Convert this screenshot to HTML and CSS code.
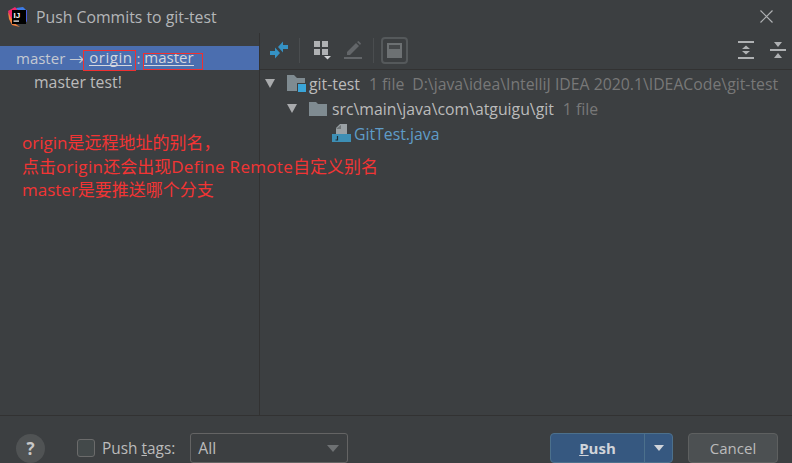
FILE: index.html
```html
<!DOCTYPE html>
<html>
<head lang="en">
    <meta charset="UTF-8">
    <title>Push Commits to git-test</title>
    <link rel="stylesheet" href="styles.css">
</head>
<body>
<div class="dialog">
    <div class="titlebar">
        <svg class="logo" width="20" height="20" viewBox="0 0 20 20">
            <path d="M0 4 L7 0 L11 4 L4 13 L2 12Z" fill="#f0286c"/>
            <path d="M8 1 L15 0 L19 4 L19 9 L12 6Z" fill="#3c7be8"/>
            <path d="M15 3 L19 3 L19 15 L14 12Z" fill="#4a5ee0"/>
            <path d="M0 5 L6 16 L12 20 L4 18 L1 12Z" fill="#f5823c"/>
            <rect x="4" y="3" width="14" height="14" fill="#000"/>
            <text class="logo-text" x="5.5" y="11">IJ</text>
            <rect x="5.5" y="13.5" width="5.5" height="1.2" fill="#fff"/>
        </svg>
        <span class="title">Push Commits to git-test</span>
        <svg class="close" width="13" height="13" viewBox="0 0 13 13">
            <path d="M0.5 0.5 L12.5 12.5 M12.5 0.5 L0.5 12.5" stroke="#afb1b3" stroke-width="1.2" fill="none"/>
        </svg>
    </div>

    <div class="main">
        <div class="left">
            <div class="row-selected">
                <span>master</span>
                <span class="arrow">→</span>
                <a class="link link-origin">origin</a>
                <span class="colon">:</span>
                <a class="link">master</a>
            </div>
            <div class="row-commit">master test!</div>
        </div>

        <div class="right">
            <div class="toolbar">
                <svg class="tool" width="18" height="18" viewBox="0 0 18 18">
                    <path d="M8 6 L13 0.5 V4 H18 V8 H13 V11.5Z" fill="#3592c4"/>
                    <path d="M10 12 L5 6.5 V10 H0 V14 H5 V17.5Z" fill="#3592c4"/>
                </svg>
                <span class="sep sep-a"></span>
                <svg class="tool tool-group" width="17" height="19" viewBox="0 0 17 19">
                    <rect x="0" y="0" width="6" height="6" fill="#afb1b3"/>
                    <rect x="8" y="0" width="6" height="6" fill="#afb1b3"/>
                    <rect x="0" y="8" width="6" height="6" fill="#afb1b3"/>
                    <rect x="8" y="8" width="6" height="6" fill="#afb1b3"/>
                    <path d="M10 15 H17 L13.5 18.5Z" fill="#d0d2d4"/>
                </svg>
                <svg class="tool tool-edit" width="18" height="18" viewBox="0 0 18 18">
                    <path d="M3 11 L12 2 L15 5 L6 14 L3 14Z" fill="#636669"/>
                    <path d="M13 1 L14.5 0 L17 2.5 L16 4Z" fill="#636669"/>
                    <rect x="0" y="16" width="18" height="2" fill="#636669"/>
                </svg>
                <span class="sep sep-b"></span>
                <span class="toggle">
                    <svg width="15" height="15" viewBox="0 0 15 15">
                        <rect width="15" height="15" fill="#6d7173"/>
                        <rect x="2" y="2" width="11" height="4" fill="#45484a"/>
                    </svg>
                </span>
                <span class="spacer"></span>
                <svg class="tool" width="16" height="18" viewBox="0 0 16 18">
                    <path d="M0 1 H16 M0 17 H16" stroke="#afb1b3" stroke-width="2" fill="none"/>
                    <path d="M4 8 L8 4.5 L12 8Z M4 10 L8 13.5 L12 10Z" fill="#afb1b3"/>
                </svg>
                <svg class="tool tool-last" width="16" height="16" viewBox="0 0 16 16">
                    <path d="M0 8 H16" stroke="#afb1b3" stroke-width="2" fill="none"/>
                    <path d="M4 0 H12 L8 5Z M4 16 H12 L8 11Z" fill="#afb1b3"/>
                </svg>
            </div>

            <div class="tree">
                <div class="node node-root">
                    <span class="caret"></span>
                    <svg class="folder" width="19" height="17" viewBox="0 0 19 17">
                        <path d="M0 0 H7 L10 3 H18 V16 H0Z" fill="#7f8b91"/>
                        <rect x="10" y="8" width="9" height="9" fill="#3c3f41"/>
                        <rect x="11" y="9" width="8" height="8" fill="#3aa5d8"/>
                    </svg>
                    <span class="name">git-test</span>
                    <span class="meta">1 file</span>
                    <span class="meta path">D:\java\idea\IntelliJ IDEA 2020.1\IDEACode\git-test</span>
                </div>
                <div class="node node-dir">
                    <span class="caret"></span>
                    <svg class="folder" width="18" height="14" viewBox="0 0 18 14">
                        <path d="M0 0 H7 L9 2 H18 V14 H0Z" fill="#7f8b91"/>
                    </svg>
                    <span class="name">src\main\java\com\atguigu\git</span>
                    <span class="meta">1 file</span>
                </div>
                <div class="node node-file">
                    <svg class="file" width="19" height="19" viewBox="0 0 19 19">
                        <path d="M8 0 H15 V10 H4 V4Z" fill="#9aa1a5"/>
                        <path d="M4 5 H9 V1Z" fill="#6f7577"/>
                        <rect x="0" y="10" width="19" height="8" fill="#3d8fb5"/>
                        <path d="M5.5 12 V16 H3.5" stroke="#1f2a30" stroke-width="1.2" fill="none"/>
                    </svg>
                    <span class="file-name">GitTest.java</span>
                </div>
            </div>
        </div>
    </div>

    <div class="footer">
        <span class="help">?</span>
        <span class="checkbox"></span>
        <span class="tags-label">Push <u>t</u>ags:</span>
        <span class="select">
            <span>All</span>
            <span class="select-caret"></span>
        </span>
        <span class="spacer"></span>
        <span class="push">
            <span class="push-main"><u>P</u>ush</span>
            <span class="push-more"><span class="push-caret"></span></span>
        </span>
        <span class="cancel">Cancel</span>
    </div>

    <!-- red marks drawn over the screenshot -->
    <div class="mark mark-origin"></div>
    <div class="mark mark-master"></div>
    <div class="note">origin是远程地址的别名，<br>点击<span class="note-latin">origin</span>还会出现<span class="note-latin">Define Remote</span>自定义别名<br>master是要推送哪个分支</div>
</div>
</body>
</html>
```

FILE: styles.css
```css
* {
    box-sizing: border-box;
}

html, body {
    margin: 0;
    padding: 0;
}

body {
    width: 792px;
    height: 463px;
    overflow: hidden;
    background: #3c3f41;
    color: #bbbbbb;
    font-family: "Open Sans", "Noto Sans", "Noto Sans CJK SC", sans-serif;
    font-size: 15px;
}

.dialog {
    position: relative;
    width: 792px;
    height: 463px;
    display: flex;
    flex-direction: column;
}

.titlebar {
    height: 33px;
    flex: none;
    display: flex;
    align-items: center;
    padding: 0 19px 0 8px;
}

.logo {
    flex: none;
}

.logo-text {
    font-family: "Liberation Sans", sans-serif;
    font-size: 8px;
    font-weight: bold;
    fill: #fff;
}

.title {
    margin-left: 8px;
    font-size: 15.8px;
    color: #b4b6b8;
    flex: 1;
}

.main {
    flex: 1;
    display: flex;
    min-height: 0;
}

.left {
    width: 260px;
    flex: none;
    padding-top: 13px;
    border-right: 1px solid #323232;
}

.row-selected {
    height: 24px;
    background: #4b6eaf;
    display: flex;
    align-items: center;
    padding-left: 16px;
    color: #c4c9d2;
    white-space: pre;
}

.arrow {
    margin: 0 3px 0 4px;
}

.link {
    color: #d3d7df;
    border-bottom: 1px solid #d3d7df;
    line-height: 15px;
}

.link-origin {
    margin-left: 2px;
    letter-spacing: 0.5px;
}

.colon {
    margin: 0 4px 0 4px;
}

.row-commit {
    height: 24px;
    line-height: 24px;
    padding-left: 34px;
    font-size: 15.8px;
}

.right {
    flex: 1;
    min-width: 0;
}

.toolbar {
    height: 37px;
    display: flex;
    align-items: center;
    padding: 0 6px 2px 10px;
    border-bottom: 1px solid #323232;
}

.tool {
    flex: none;
}

.tool-group {
    margin-left: 14px;
}

.tool-edit {
    margin-left: 13px;
}

.tool-last {
    margin-left: 16px;
}

.sep {
    width: 1px;
    height: 25px;
    background: #4a4d4f;
    flex: none;
}

.sep-a {
    margin-left: 11px;
}

.sep-b {
    margin-left: 11px;
    margin-right: 7px;
}

.toggle {
    width: 27px;
    height: 27px;
    border: 2px solid #55595b;
    border-radius: 4px;
    background: #3c3f41;
    display: flex;
    align-items: center;
    justify-content: center;
}

.spacer {
    flex: 1;
}

.tree {
    padding-top: 1px;
    font-size: 15.8px;
}

.node {
    height: 25px;
    display: flex;
    align-items: center;
    white-space: nowrap;
}

.caret {
    width: 0;
    height: 0;
    border-left: 5px solid transparent;
    border-right: 5px solid transparent;
    border-top: 9px solid #a9abad;
    flex: none;
}

.node-root {
    padding-left: 5px;
}

.node-root .folder {
    margin-left: 12px;
    margin-right: 3px;
}

.node-dir {
    padding-left: 27px;
}

.node-dir .folder {
    margin-left: 12px;
    margin-right: 5px;
}

.node-file {
    padding-left: 72px;
}

.name {
    color: #bbbbbb;
}

.meta {
    color: #787878;
    margin-left: 9px;
}

.path {
    margin-left: 8px;
}

.file-name {
    color: #5f9cc8;
    margin-left: 3px;
}

.footer {
    height: 48px;
    flex: none;
    display: flex;
    align-items: center;
    border-top: 1px solid #323232;
    padding: 17px 14px 0 16px;
}

.help {
    width: 29px;
    height: 29px;
    border-radius: 50%;
    background: #505354;
    color: #c8c8c8;
    font-weight: bold;
    font-size: 17px;
    display: flex;
    align-items: center;
    justify-content: center;
    flex: none;
}

.checkbox {
    width: 18px;
    height: 18px;
    margin-left: 32px;
    border: 1px solid #6b6b6b;
    border-radius: 3px;
    background: #43494a;
    flex: none;
}

.tags-label {
    margin-left: 7px;
    font-size: 15.4px;
}

.select {
    width: 158px;
    height: 30px;
    margin-left: 15px;
    border: 1px solid #646464;
    border-radius: 3px;
    display: flex;
    align-items: center;
    justify-content: space-between;
    padding: 0 8px 0 7px;
    background: #3c3f41;
    font-size: 15.8px;
}

.select-caret {
    width: 0;
    height: 0;
    border-left: 6px solid transparent;
    border-right: 6px solid transparent;
    border-top: 7px solid #6e7173;
}

.push {
    display: flex;
    width: 123px;
    height: 30px;
    border: 1px solid #4c708c;
    border-radius: 4px;
    background: #365880;
    color: #d0d4da;
    font-weight: bold;
}

.push-main {
    flex: 1;
    display: flex;
    align-items: center;
    justify-content: center;
    white-space: pre;
    padding-left: 0;
}

.push-more {
    width: 28px;
    display: flex;
    align-items: center;
    justify-content: center;
    border-left: 1px solid #4c708c;
}

.push-caret {
    width: 0;
    height: 0;
    border-left: 5px solid transparent;
    border-right: 5px solid transparent;
    border-top: 6px solid #d0d4da;
}

.cancel {
    width: 90px;
    height: 30px;
    margin-left: 15px;
    border: 1px solid #5e6060;
    border-radius: 4px;
    background: #4c5052;
    display: flex;
    align-items: center;
    justify-content: center;
}

/* annotation */
.mark {
    position: absolute;
    border: 1px solid #f03030;
}

.mark-origin {
    left: 83px;
    top: 50px;
    width: 53px;
    height: 21px;
}

.mark-master {
    left: 143px;
    top: 53px;
    width: 60px;
    height: 17px;
}

.note {
    position: absolute;
    left: 22px;
    top: 131px;
    color: #f23434;
    font-size: 17px;
    line-height: 23.5px;
    white-space: nowrap;
}

.note-latin {
    letter-spacing: 0.3px;
}
```
